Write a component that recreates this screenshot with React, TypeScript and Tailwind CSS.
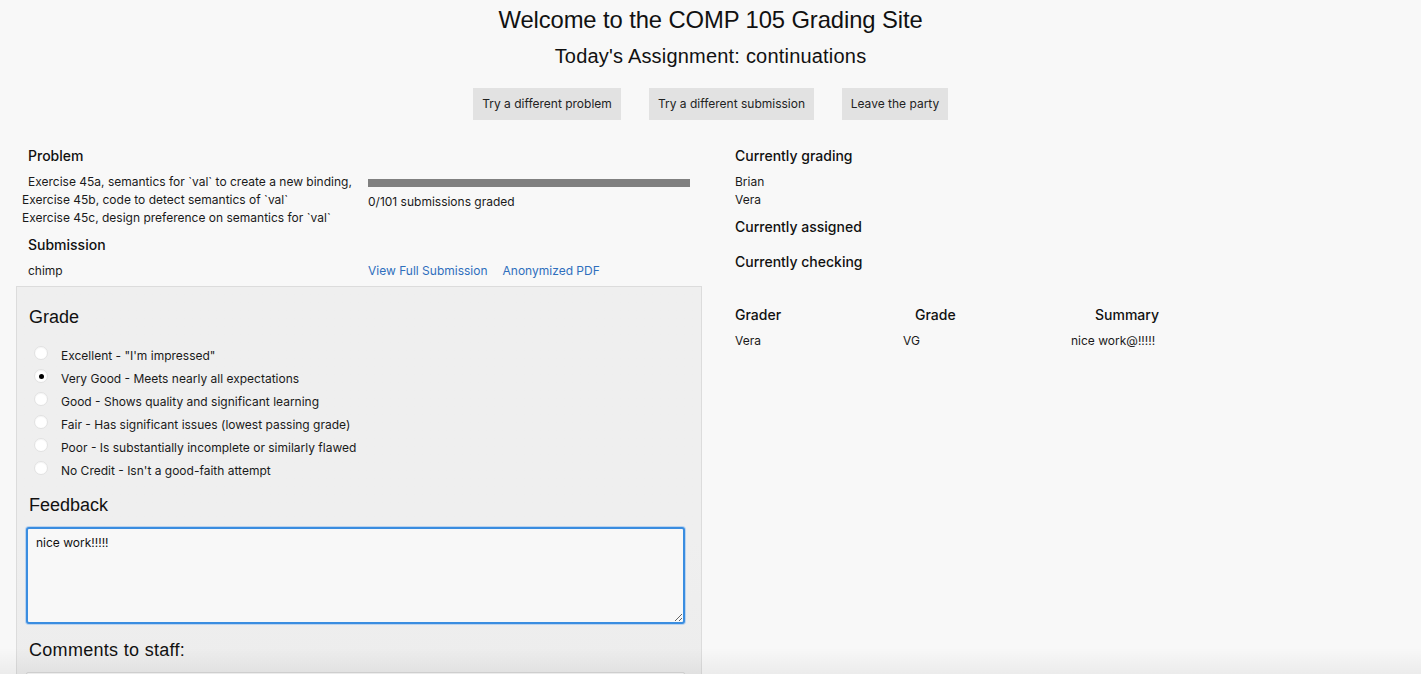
import React from "react";

// Options for the grade radio list
const gradeOptions = [
  { label: 'Excellent - "I\'m impressed"', checked: false },
  { label: "Very Good - Meets nearly all expectations", checked: true },
  { label: "Good - Shows quality and significant learning", checked: false },
  { label: "Fair - Has significant issues (lowest passing grade)", checked: false },
  { label: "Poor - Is substantially incomplete or similarly flawed", checked: false },
  { label: "No Credit - Isn't a good-faith attempt", checked: false },
];

const sans = '"Liberation Sans", Arial, sans-serif';
const small = 'Inter, "Liberation Sans", Arial, sans-serif';

const Radio: React.FC<{ checked: boolean }> = ({ checked }) => (
  <span className="w-[14px] h-[14px] rounded-full bg-white border border-[#e2e2e2] shadow-[inset_0_1px_1px_rgba(0,0,0,0.04)] flex items-center justify-center -mt-[5px]">
    {checked && <span className="w-[5px] h-[5px] rounded-full bg-black" />}
  </span>
);

const App: React.FC = () => {
  return (
    <div
      className="min-h-screen bg-[#f8f8f8] text-[#1a1a1a] relative overflow-hidden"
      style={{ fontFamily: small }}
    >
      {/* Header */}
      <div className="flex flex-col items-center pt-[6px]">
        <h1 className="text-[23.8px] leading-[28px] text-[#111] tracking-[-0.1px]" style={{ fontFamily: sans }}>
          Welcome to the COMP 105 Grading Site
        </h1>
        <h2 className="text-[20px] leading-[24px] mt-[10px] text-[#111] tracking-[0.2px]" style={{ fontFamily: sans }}>
          Today's Assignment: continuations
        </h2>
        <div className="flex gap-[28px] mt-[20px]">
          <button className="h-[32px] w-[148px] bg-[#e2e2e2] text-[12px] text-[#222]">
            Try a different problem
          </button>
          <button className="h-[32px] w-[165px] bg-[#e2e2e2] text-[12px] text-[#222]">
            Try a different submission
          </button>
          <button className="h-[32px] w-[106px] bg-[#e2e2e2] text-[12px] text-[#222]">
            Leave the party
          </button>
        </div>
      </div>

      {/* Main */}
      <div className="flex mt-[27px] pl-[16px]">
        {/* Left column */}
        <div className="w-[686px]">
          <div className="grid grid-cols-[340px_346px]">
            <div className="pl-[12px]">
              <h3 className="text-[14px] leading-[18px] font-medium text-[#111]">Problem</h3>
            </div>
            <div />
            <div className="pl-[6px] mt-[8px] text-[12px] leading-[18px] whitespace-nowrap">
              <div className="ml-[6px]">Exercise 45a, semantics for `val` to create a new binding,</div>
              <div>Exercise 45b, code to detect semantics of `val`</div>
              <div>Exercise 45c, design preference on semantics for `val`</div>
            </div>
            <div className="px-[12px] mt-[14px]">
              <div className="h-[8px] bg-[#808080]" />
              <div className="mt-[6px] text-[12px] leading-[18px]">0/101 submissions graded</div>
            </div>
            <div className="pl-[12px] mt-[9px]">
              <h3 className="text-[14px] leading-[18px] font-medium text-[#111]">Submission</h3>
              <div className="mt-[8px] text-[12px] leading-[18px]">chimp</div>
            </div>
            <div className="pl-[12px] mt-[9px] flex items-end gap-[15px] text-[12px] leading-[18px] text-[#2f6fbd]">
              <span>View Full Submission</span>
              <span>Anonymized PDF</span>
            </div>
          </div>

          {/* Grade panel */}
          <div className="mt-[6px] border border-[#dcdcdc] bg-gradient-to-b from-[#efefef] via-[#efefef] to-[#ebebeb] pl-[12px] pr-[16px] pt-[19px] pb-[20px]">
            <h3 className="text-[18px] leading-[22px] text-[#111]" style={{ fontFamily: sans }}>Grade</h3>
            <div className="mt-[16px] flex flex-col">
              {gradeOptions.map((opt) => (
                <label
                  key={opt.label}
                  className="h-[23px] flex items-center text-[12px] text-[#1a1a1a]"
                >
                  <span className="ml-[5px] mr-[13px]">
                    <Radio checked={opt.checked} />
                  </span>
                  {opt.label}
                </label>
              ))}
            </div>

            <h3 className="mt-[12px] text-[18px] leading-[22px] text-[#111]" style={{ fontFamily: sans }}>Feedback</h3>
            <textarea
              readOnly
              defaultValue="nice work!!!!!"
              className="mt-[11px] ml-[-3px] block w-[659px] h-[97px] bg-[#f8f8f8] border-2 border-[#3a8de0] rounded-[3px] px-[8px] py-[6px] text-[12px] leading-[16px] text-[#111] outline-none shadow-[0_0_0_1px_rgba(90,160,240,0.35)]"
              style={{ fontFamily: small }}
            />

            <h3 className="mt-[15px] text-[18px] leading-[22px] text-[#111] tracking-[0.3px]" style={{ fontFamily: sans }}>
              Comments to staff:
            </h3>
            <textarea
              readOnly
              className="mt-[11px] ml-[-3px] block w-[659px] h-[97px] bg-[#f8f8f8] border border-[#d8d8d8] rounded-[2px] outline-none"
            />
          </div>
        </div>

        {/* Right column */}
        <div className="ml-[33px] flex-1">
          <h3 className="text-[14px] leading-[18px] font-medium text-[#111]">Currently grading</h3>
          <div className="mt-[8px] text-[12px] leading-[18px]">
            <div>Brian</div>
            <div>Vera</div>
          </div>
          <h3 className="mt-[9px] text-[14px] leading-[18px] font-medium text-[#111]">Currently assigned</h3>
          <h3 className="mt-[17px] text-[14px] leading-[18px] font-medium text-[#111]">Currently checking</h3>

          <div className="mt-[35px] grid grid-cols-[168px_168px_168px]">
            <div className="text-[14px] leading-[18px] font-medium text-[#111]">Grader</div>
            <div className="pl-[12px] text-[14px] leading-[18px] font-medium text-[#111]">Grade</div>
            <div className="pl-[24px] text-[14px] leading-[18px] font-medium text-[#111]">Summary</div>
            <div className="mt-[8px] text-[12px] leading-[18px]">Vera</div>
            <div className="mt-[8px] text-[12px] leading-[18px]">VG</div>
            <div className="mt-[8px] text-[12px] leading-[18px]">nice work@!!!!!</div>
          </div>
        </div>
      </div>

      {/* faint window shadow at the bottom edge */}
      <div className="pointer-events-none absolute left-0 right-0 top-[648px] h-[26px] bg-gradient-to-b from-transparent to-[rgba(0,0,0,0.05)]" />
    </div>
  );
};

export default App;
